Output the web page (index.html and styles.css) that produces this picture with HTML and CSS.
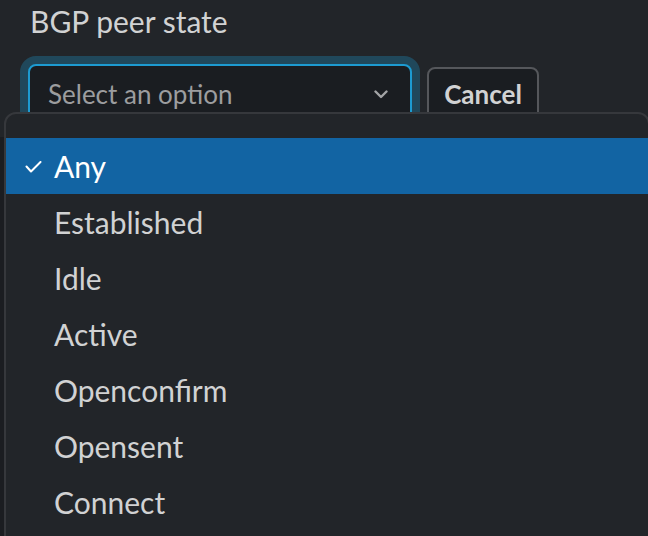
FILE: index.html
```html
<!DOCTYPE html>
<html>
<head>
<meta charset="utf-8">
<link rel="stylesheet" href="styles.css">
</head>
<body>
<div class="field">
  <label class="label">BGP peer state</label>
  <div class="row">
    <div class="select">
      <span class="placeholder">Select an option</span>
      <svg class="chevron" width="14" height="9" viewBox="0 0 14 9"><path d="M1.5 1.5 L7 7 L12.5 1.5" fill="none" stroke="#a3a4a6" stroke-width="2.4" stroke-linecap="round" stroke-linejoin="round"/></svg>
    </div>
    <button class="cancel">Cancel</button>
  </div>
  <div class="menu">
    <div class="item selected">
      <svg class="check" width="17" height="12" viewBox="0 0 17 12"><path d="M1.5 5.5 L6 10.5 L15.5 1" fill="none" stroke="#ffffff" stroke-width="2" stroke-linecap="round" stroke-linejoin="round"/></svg>
      <span>Any</span>
    </div>
    <div class="item"><span>Established</span></div>
    <div class="item"><span>Idle</span></div>
    <div class="item"><span>Active</span></div>
    <div class="item"><span>Openconfirm</span></div>
    <div class="item"><span>Opensent</span></div>
    <div class="item"><span>Connect</span></div>
  </div>
</div>
</body>
</html>
```
FILE: styles.css
```css
html, body {
  margin: 0;
  padding: 0;
  background: #222529;
  height: 100%;
  overflow: hidden;
}
body {
  font-family: Lato, "Noto Sans", sans-serif;
  color: #d1d2d3;
}
.field {
  position: relative;
  height: 100%;
  padding: 0 0 0 28px;
}
.field::before {
  content: "";
  position: absolute;
  left: 0;
  top: 137px;
  bottom: 0;
  width: 5px;
  background: #1b1d21;
}
.label {
  display: block;
  padding: 1px 0 0 2px;
  font-size: 30px;
  line-height: 40px;
  color: #d1d2d3;
}
.row {
  display: flex;
  align-items: flex-start;
  gap: 15px;
  margin-top: 23px;
}
.select {
  box-sizing: border-box;
  width: 384px;
  height: 60px;
  border: 2px solid #1d9bd1;
  border-radius: 8px;
  background: #1a1d21;
  box-shadow: 0 0 0 8px rgba(29, 155, 209, 0.3);
  display: flex;
  align-items: center;
  justify-content: space-between;
  padding: 0 22px 0 18px;
}
.placeholder {
  font-size: 26px;
  color: #9c9d9f;
}
.chevron {
  display: block;
}
.cancel {
  box-sizing: border-box;
  margin-top: 3px;
  width: 112px;
  height: 54px;
  border: 2px solid #55575b;
  border-radius: 8px;
  background: #1a1d21;
  color: #d1d2d3;
  font-family: Lato, "Noto Sans", sans-serif;
  font-weight: 700;
  font-size: 26px;
  padding: 0;
}
.menu {
  position: absolute;
  left: 4px;
  top: 112px;
  width: 646px;
  box-sizing: border-box;
  border: 2px solid #36383c;
  border-radius: 12px;
  background: #222529;
  padding: 24px 0;
}
.item {
  position: relative;
  height: 56px;
  display: flex;
  align-items: center;
  padding-left: 48px;
  font-size: 30px;
  color: #d1d2d3;
}
.item.selected {
  background: #1264a3;
  color: #ffffff;
}
.check {
  position: absolute;
  left: 19px;
  top: 23px;
}
```
